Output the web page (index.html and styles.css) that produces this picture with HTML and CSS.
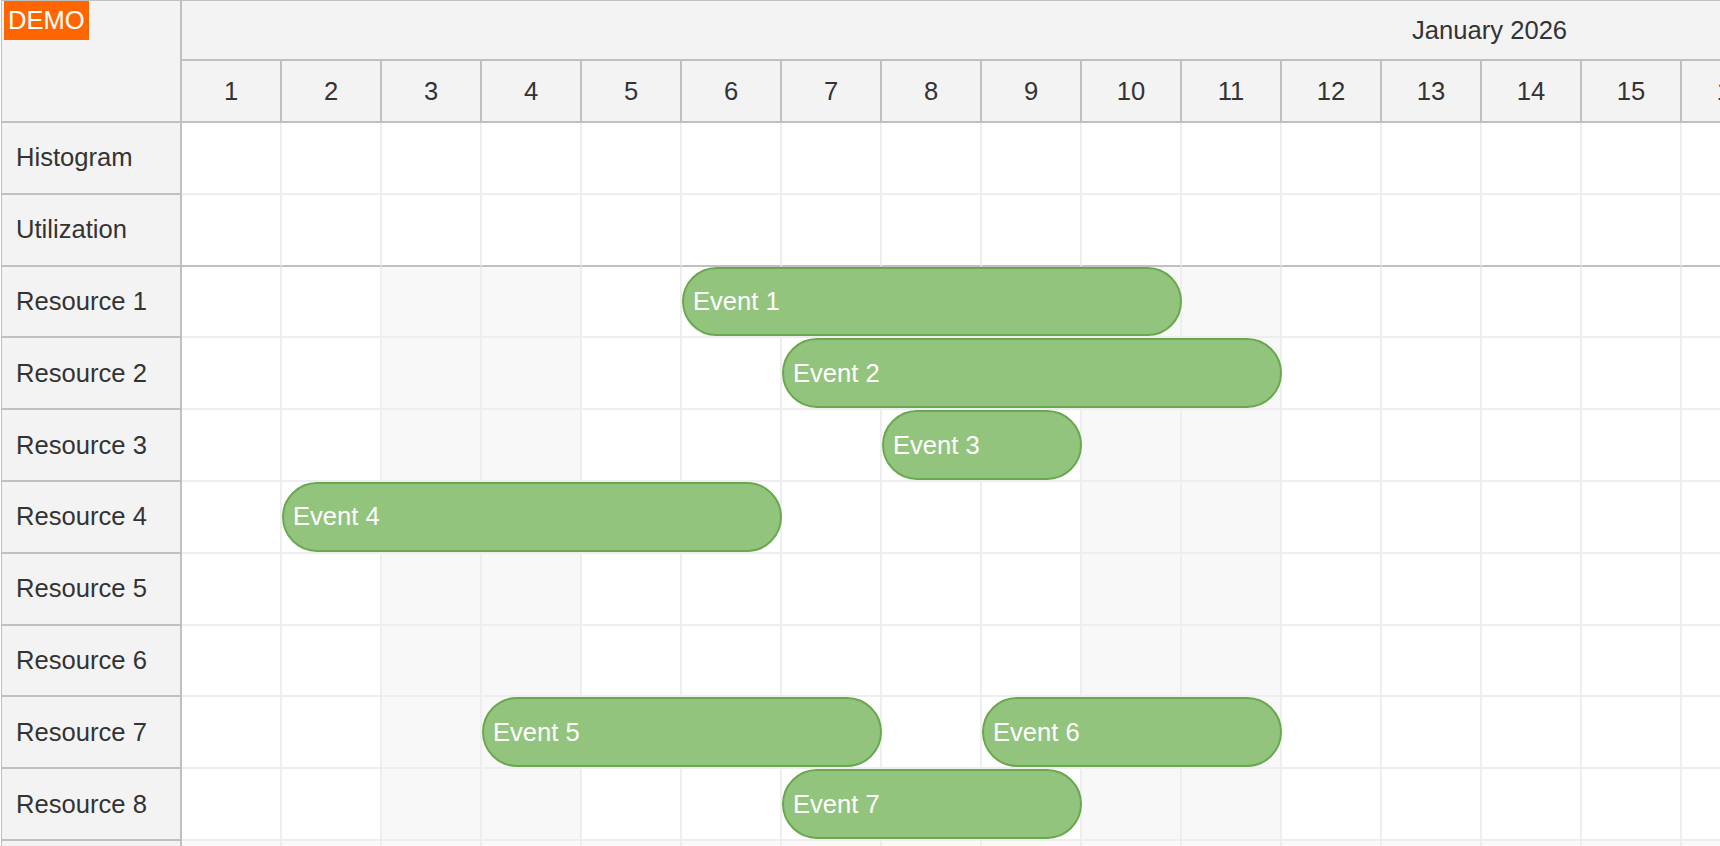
FILE: index.html
```html
<!DOCTYPE html>
<html lang="en">
<head>
  <meta charset="UTF-8"/>
  <meta name="viewport" content="width=device-width, initial-scale=1.0"/>
  <title>Scheduler - January 2026</title>
  <link rel="stylesheet" href="styles.css">
</head>
<body>

  <div class="scheduler">
    <div class="corner"><span class="demo">DEMO</span></div>
    <div class="timeheader">
      <div class="month">January 2026</div>
      <div class="days" id="days"></div>
    </div>
    <div class="rowheaders" id="rowheaders"></div>
    <div class="grid" id="grid"></div>
  </div>

  <script>
    const year = 2026, month = 0, dayCount = 31;

    const rows = [
      { name: "Histogram", special: true },
      { name: "Utilization", special: true, split: true },
      { name: "Resource 1" },
      { name: "Resource 2" },
      { name: "Resource 3" },
      { name: "Resource 4" },
      { name: "Resource 5" },
      { name: "Resource 6" },
      { name: "Resource 7" },
      { name: "Resource 8" },
      { name: "", filler: true }
    ];

    // row index, first day, length in days
    const events = [
      { text: "Event 1", row: 2, start: 6, days: 5 },
      { text: "Event 2", row: 3, start: 7, days: 5 },
      { text: "Event 3", row: 4, start: 8, days: 2 },
      { text: "Event 4", row: 5, start: 2, days: 5 },
      { text: "Event 5", row: 8, start: 4, days: 4 },
      { text: "Event 6", row: 8, start: 9, days: 3 },
      { text: "Event 7", row: 9, start: 7, days: 3 }
    ];

    const cellWidth = 100;
    const daysEl = document.getElementById("days");
    const headersEl = document.getElementById("rowheaders");
    const gridEl = document.getElementById("grid");

    for (let d = 1; d <= dayCount; d++) {
      const el = document.createElement("div");
      el.className = "day";
      el.textContent = d;
      daysEl.appendChild(el);
    }

    rows.forEach(function(r) {
      const head = document.createElement("div");
      head.className = "rowheader" + (r.split ? " split" : "") + (r.filler ? " filler" : "");
      head.textContent = r.name;
      headersEl.appendChild(head);

      const row = document.createElement("div");
      row.className = "row" + (r.split ? " split" : "") + (r.filler ? " filler" : "");
      for (let d = 1; d <= dayCount; d++) {
        const cell = document.createElement("div");
        const dow = new Date(year, month, d).getDay();
        cell.className = "cell";
        if (!r.special && (dow === 0 || dow === 6)) cell.className += " weekend";
        row.appendChild(cell);
      }
      gridEl.appendChild(row);
    });

    events.forEach(function(e) {
      const el = document.createElement("div");
      el.className = "event";
      el.textContent = e.text;
      el.style.left = ((e.start - 1) * cellWidth) + "px";
      el.style.width = (e.days * cellWidth) + "px";
      gridEl.children[e.row].appendChild(el);
    });
  </script>

</body>
</html>
```

FILE: styles.css
```css
* {
  box-sizing: border-box;
}
body {
  margin: 0;
  font-family: 'Liberation Sans', Arial, sans-serif;
  font-size: 25.6px;
  color: #333;
  background: #fff;
  overflow: hidden;
}
.scheduler {
  display: grid;
  grid-template-columns: 180px 1fr;
  margin-left: 1px;
  border-top: 1px solid #c0c0c0;
  border-left: 1px solid #c0c0c0;
}
.corner {
  position: relative;
  height: 122px;
  background: #f3f3f3;
  border-right: 2px solid #c0c0c0;
  border-bottom: 2px solid #c0c0c0;
}
.demo {
  position: absolute;
  left: 2px;
  top: 0;
  padding: 0 4px;
  line-height: 39px;
  background: #ff6600;
  color: #fff;
}
.timeheader {
  overflow: hidden;
  background: #f3f3f3;
  border-bottom: 2px solid #c0c0c0;
}
.month {
  height: 60px;
  display: flex;
  align-items: center;
  padding-left: 1230px;
  border-bottom: 2px solid #c0c0c0;
  white-space: nowrap;
}
.days {
  display: flex;
  height: 60px;
}
.day {
  flex: 0 0 100px;
  display: flex;
  align-items: center;
  justify-content: center;
  border-right: 2px solid #c0c0c0;
}
.rowheader {
  height: 71.8px;
  display: flex;
  align-items: center;
  padding-left: 14px;
  background: #f3f3f3;
  border-right: 2px solid #c0c0c0;
  border-bottom: 2px solid #c0c0c0;
  white-space: nowrap;
}
.grid {
  overflow: hidden;
}
.row {
  position: relative;
  display: flex;
  height: 71.8px;
  width: 3100px;
}
.cell {
  flex: 0 0 100px;
  border-right: 2px solid #eee;
  border-bottom: 2px solid #eee;
}
.row.split .cell {
  border-bottom-color: #c0c0c0;
}
.cell.weekend {
  background: #f8f8f8;
}
.row.filler .cell {
  background: #fafafa;
}
.event {
  position: absolute;
  top: 0;
  height: calc(100% - 2px);
  display: flex;
  align-items: center;
  padding-left: 9px;
  background: #93c47d;
  border: 2px solid #6aa84f;
  border-radius: 36px;
  color: #fff;
  white-space: nowrap;
}
```
